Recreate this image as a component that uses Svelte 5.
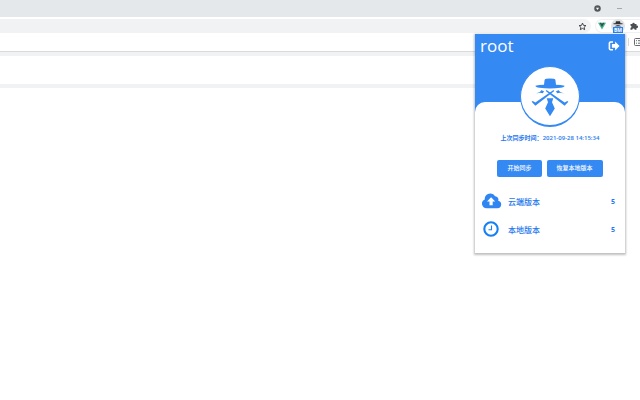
<script lang="ts">
  const user = 'root';
  const lastSync = '2021-09-28 14:15:34';
  const cloudVersion = 5;
  const localVersion = 5;
</script>

<div class="browser">
  <div class="title-bar">
    <svg class="tab-search" viewBox="0 0 8 8" aria-hidden="true">
      <circle cx="4" cy="4" r="3.7" fill="#54585c" />
      <path d="M2.2 3h3.6L4 5.6z" fill="#fff" />
    </svg>
    <span class="minimize"></span>
  </div>

  <div class="toolbar">
    <div class="address">
      <svg class="star" viewBox="0 0 10 10" aria-hidden="true">
        <path d="M5 1.2l1.1 2.5 2.7.3-2 1.8.6 2.7L5 7.1 2.6 8.5l.6-2.7-2-1.8 2.7-.3z" fill="none" stroke="#33363a" />
      </svg>
    </div>
    <div class="extensions">
      <svg class="vue" viewBox="0 0 8 8" aria-hidden="true">
        <path d="M0 .7h8L4 7.6z" fill="#41b883" />
        <path d="M1.6.7h1.6L4 2.2 4.8.7h1.6L4 4.9z" fill="#34495e" />
      </svg>
      <div class="active-extension">
        <svg viewBox="0 0 12 8" aria-hidden="true">
          <path d="M1.500 4.200h9v1h-9zM4 2.200h4l.5 2h-5z" fill="#333" />
          <path d="M2.500 7.500L5 6h2l2.500 1.500z" fill="#555" />
        </svg>
        <span class="badge">BM</span>
      </div>
      <svg class="puzzle" viewBox="0 0 8 8" aria-hidden="true">
        <path d="M.5 2h1.8a1.2 1.2 0 1 1 2.4 0h1.8v1.7a1.2 1.2 0 1 1 0 2.3v1.7H4.7a1.2 1.2 0 0 0-2.4 0H.5V5.7a1 1 0 0 0 0-2z" fill="#4b4f53" />
      </svg>
    </div>
  </div>

  <div class="bookmarks">
    <span class="separator"></span>
    <svg viewBox="0 0 8 8" aria-hidden="true">
      <rect x=".5" y=".5" width="7" height="7" rx="1" fill="none" stroke="#666a6e" />
      <path d="M2 2.7h1M4 2.7h3M2 5.2h1M4 5.2h3" stroke="#666a6e" />
    </svg>
  </div>
  <div class="band"></div>
  <div class="page-head"></div>
  <div class="band"></div>
</div>

<main class="popup">
  <header>
    <h1>{user}</h1>
    <button class="logout" aria-label="logout">
      <svg viewBox="0 0 12 12" aria-hidden="true">
        <path d="M5 2H2.7Q1.4 2 1.4 3.3v5.1q0 1.3 1.3 1.3H5" fill="none" stroke="#fff" stroke-width="1.6" />
        <path d="M3.9 4.1h3.2V1.5L11.5 6 7.1 10.4V7.8H3.9z" fill="#fff" />
      </svg>
    </button>
  </header>

  <section class="content">
    <div class="avatar">
      <svg viewBox="0 0 58 58" aria-hidden="true">
        <g fill="#3589f3">
          <path d="M23.6 13q0-1 1.6-1.3 3.8-.6 7.6 0 1.6.3 1.6 1.3l.6 4.8q5 .2 8.6 1-.2 1.5-4 2-10.6 1.3-21.2 0-3.8-.5-4-2 3.6-.8 8.6-1z" />
          <path d="M15 26.600q4.200-1.100 5.800-3.600 1 1.200 2.400 1.300l-1.500 1.900q-3-1-6.700.4z" />
          <path d="M43 26.600q-4.200-1.100-5.800-3.600-1 1.200-2.400 1.300l1.500 1.900q3-1 6.700.4z" />
          <path d="M32.500 23l.8 1.100L14.400 38.800l-3.800-4 1.200-.8 2.500 1.600z" />
          <path d="M25.500 23l-.8 1.100 18.900 14.700 3.800-4-1.200-.8-2.500 1.600z" />
          <path d="M25.700 31.200h6.600L31 35.200l2.800 6.300L29 49.200l-4.800-7.700 2.800-6.300z" />
        </g>
      </svg>
    </div>

    <p class="sync-time">上次同步时间：<time datetime="2021-09-28T14:15:34">{lastSync}</time></p>

    <div class="actions">
      <button>开始同步</button>
      <button>恢复本地版本</button>
    </div>

    <dl>
      <div class="version">
        <svg viewBox="0 0 20 16" aria-hidden="true">
          <path d="M4.600 15.200a4.600 4.600 0 0 1-1.900-8.800A5.700 5.700 0 0 1 13.200 3.200a3.300 3.300 0 0 1 3 4.500A3.800 3.800 0 0 1 15.600 15.200z" fill="#2f86f3" />
          <path d="M9.100 4.200l4.100 4.400h-2.500v3.700H7.500V8.600H5z" fill="#fff" />
        </svg>
        <dt>云端版本</dt>
        <dd>{cloudVersion}</dd>
      </div>
      <div class="version">
        <svg viewBox="0 0 20 16" aria-hidden="true">
          <circle cx="9" cy="8" r="6.700" fill="none" stroke="#1580f5" stroke-width="2.100" />
          <path d="M9.500 4.500v4.300h-3" fill="none" stroke="#1580f5" stroke-width="1.100" />
        </svg>
        <dt>本地版本</dt>
        <dd>{localVersion}</dd>
      </div>
    </dl>
  </section>
</main>

<style>
  :global(body) {
    margin: 0;
    background: #fff;
    font-family: "Open Sans", "Noto Sans CJK SC", sans-serif;
  }
  svg {
    display: block;
    flex-shrink: 0;
  }
  button {
    border: 0;
    padding: 0;
    font-family: inherit;
    cursor: pointer;
  }

  .title-bar {
    display: flex;
    justify-content: flex-end;
    align-items: center;
    gap: 16px;
    height: 17px;
    padding-right: 18px;
    border-bottom: 2px solid #fff;
    background: #e4e8eb;
  }
  .tab-search {
    width: 7px;
    height: 7px;
  }
  .minimize {
    width: 5px;
    height: 1px;
    background: #a4a8ab;
  }
  .toolbar {
    display: flex;
    height: 14px;
    background: #fff;
  }
  .address {
    display: flex;
    flex: 1;
    align-items: center;
    justify-content: flex-end;
    padding-right: 4px;
    border-radius: 0 7px 7px 0;
    background: #f1f2f4;
  }
  .star {
    width: 9px;
    height: 9px;
  }
  .extensions {
    display: flex;
    align-items: center;
    gap: 5px;
    box-sizing: border-box;
    width: 45px;
    margin-left: 4px;
    padding-left: 2px;
    border: 1px solid #eff0f2;
    border-right: 0;
    border-radius: 7px 0 0 7px;
  }
  .vue {
    width: 8px;
    height: 8px;
  }
  .active-extension {
    position: relative;
    display: flex;
    justify-content: center;
    width: 14px;
    height: 14px;
    border-radius: 7px;
    background: #dfe1e4;
  }
  .active-extension svg {
    width: 12px;
    height: 8px;
  }
  .badge {
    position: absolute;
    right: 2px;
    bottom: 0;
    width: 10px;
    background: #2383f5;
    color: #fff;
    font-size: 5px;
    font-weight: 700;
    line-height: 6px;
    text-align: center;
  }
  .puzzle {
    width: 8px;
    height: 8px;
  }
  .bookmarks {
    display: flex;
    justify-content: flex-end;
    align-items: center;
    gap: 5px;
    height: 18px;
    overflow: hidden;
    border-bottom: 1px solid #d9dadc;
  }
  .separator {
    width: 1px;
    height: 8px;
    background: #d5d7d9;
  }
  .bookmarks svg {
    width: 8px;
    height: 8px;
    margin-right: -2px;
  }
  .band {
    height: 4px;
    background: #f1f2f4;
  }
  .page-head {
    height: 28px;
  }

  .popup {
    position: absolute;
    top: 34px;
    right: 15px;
    width: 150px;
    background: #3589f3;
    box-shadow: 0 1px 2px 1px rgba(0, 0, 0, 0.25);
  }
  header {
    display: flex;
    justify-content: space-between;
    align-items: center;
    height: 24px;
    padding: 0 5px;
    color: #fff;
  }
  h1 {
    margin: 0;
    font-size: 17px;
    font-weight: 400;
    line-height: 24px;
  }
  .logout {
    background: none;
  }
  .logout svg {
    width: 12px;
    height: 12px;
  }
  .content {
    display: flow-root;
    margin-top: 44px;
    padding-bottom: 10px;
    border-radius: 10px 10px 0 0;
    background: #fff;
    color: #2678ee;
  }
  .avatar {
    width: 58px;
    height: 58px;
    margin: -36px auto 0;
    border: 1px solid #3589f3;
    border-bottom-width: 2px;
    border-radius: 50%;
    background: #fff;
  }
  .avatar svg {
    width: 58px;
    height: 58px;
  }
  .sync-time {
    margin: 5px 0 16px;
    font-size: 6px;
    font-weight: 600;
    line-height: 12px;
    text-align: center;
    white-space: nowrap;
  }
  .actions {
    display: flex;
    justify-content: center;
    gap: 5px;
  }
  .actions button {
    height: 17px;
    padding: 0 10px;
    border-radius: 2px;
    background: #3589f3;
    color: #fff;
    font-size: 6px;
    font-weight: 500;
    line-height: 17px;
  }
  dl {
    margin: 10px 0 0;
  }
  .version {
    display: flex;
    align-items: center;
    height: 28px;
    padding: 0 10px 0 7px;
  }
  .version svg {
    width: 20px;
    height: 16px;
    margin-right: 6px;
  }
  dt {
    flex: 1;
    font-size: 8px;
    font-weight: 500;
  }
  dd {
    margin: 0;
    font-size: 7px;
    font-weight: 700;
  }
</style>
